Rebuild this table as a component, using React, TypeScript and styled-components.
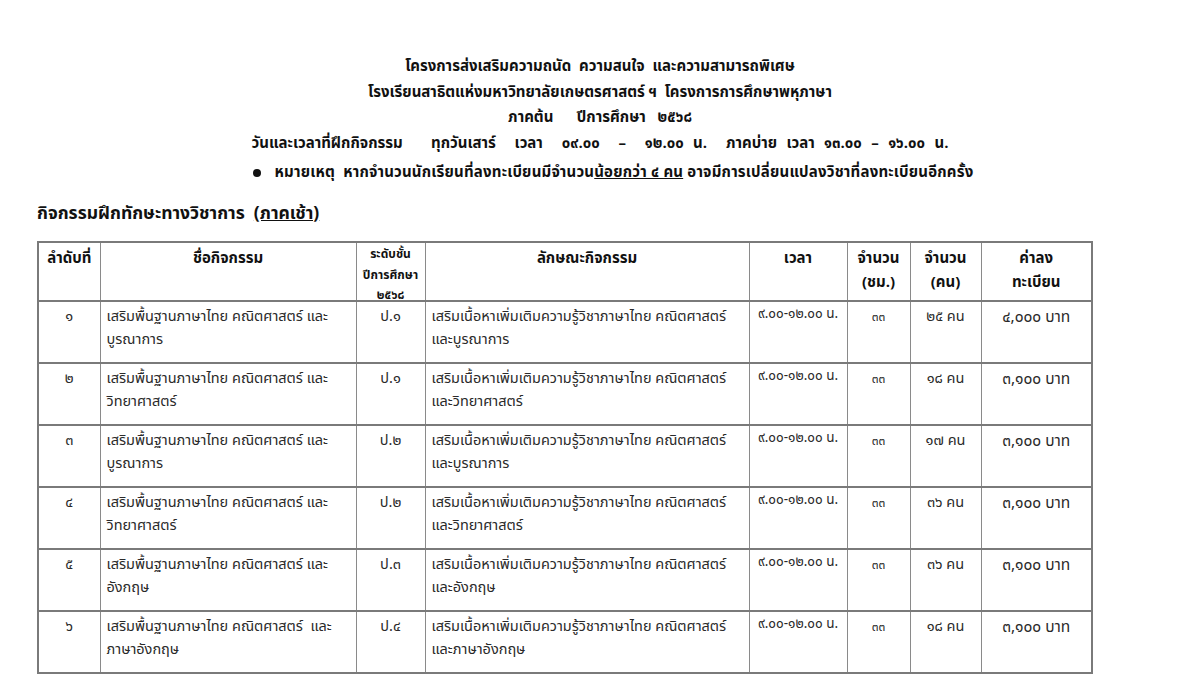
import React from "react";
import styled, { createGlobalStyle } from "styled-components";

const Global = createGlobalStyle`
  html, body { margin: 0; padding: 0; background: #ffffff; }
  body { font-family: "Noto Sans Thai", "Noto Sans", "DejaVu Sans", sans-serif; color: #1a1a1a; }
`;

const Page = styled.div`
  width: 1200px;
  height: 699px;
  overflow: hidden;
  box-sizing: border-box;
  padding: 54px 0 0 37px;
`;

const TitleBlock = styled.div`
  width: 1126px;
  display: flex;
  flex-direction: column;
  align-items: center;
`;

const TitleLine = styled.div<{ $ws?: number }>`
  font-size: 15px;
  font-weight: 700;
  line-height: 25.5px;
  white-space: pre;
  word-spacing: ${(p) => p.$ws ?? 0}px;
  color: #111;
`;

const NoteLine = styled(TitleLine)`
  display: flex;
  align-items: center;
  gap: 14px;
  margin-left: 26px;
  margin-top: 2px;
  line-height: 30px;
  letter-spacing: 0.2px;
`;

const Bullet = styled.span`
  width: 8px;
  height: 8px;
  border-radius: 50%;
  background: #111;
`;

const U = styled.span`
  text-decoration: underline;
`;

const SectionTitle = styled.div`
  font-size: 17.5px;
  font-weight: 700;
  margin-top: 13px;
  line-height: 26px;
  color: #111;
  white-space: pre;
`;

const Table = styled.table`
  margin-top: 14px;
  border-collapse: collapse;
  table-layout: fixed;
  width: 1054px;
  border: 2px solid #7a7a7a;
`;

const Th = styled.th`
  border: 1px solid #8a8a8a;
  font-size: 15px;
  line-height: 24px;
  font-weight: 700;
  text-align: center;
  vertical-align: top;
  padding: 4px 2px 0;
  height: 59px;
  box-sizing: border-box;
  color: #111;
`;

const SmallHead = styled.div`
  font-size: 12px;
  line-height: 20.5px;
  height: 52px;
  margin-top: -3px;
  overflow: visible;
`;

const Td = styled.td<{ $align?: string; $size?: number; $pt?: number }>`
  border: 1px solid #8a8a8a;
  border-top: 2px solid #7a7a7a;
  font-size: ${(p) => p.$size ?? 14.5}px;
  line-height: 23px;
  text-align: ${(p) => p.$align ?? "center"};
  vertical-align: top;
  padding: ${(p) => p.$pt ?? 4}px 6px 0;
  height: 62px;
  box-sizing: border-box;
  color: #2a2a2a;
`;

const cols = [62, 256, 69, 324, 98, 63, 71, 111];

const rows = [
  { n: "๑", name: "เสริมพื้นฐานภาษาไทย คณิตศาสตร์ และ\nบูรณาการ", lv: "ป.๑", desc: "เสริมเนื้อหาเพิ่มเติมความรู้วิชาภาษาไทย คณิตศาสตร์\nและบูรณาการ", ppl: "๒๕ คน", fee: "๔,๐๐๐ บาท" },
  { n: "๒", name: "เสริมพื้นฐานภาษาไทย คณิตศาสตร์ และ\nวิทยาศาสตร์", lv: "ป.๑", desc: "เสริมเนื้อหาเพิ่มเติมความรู้วิชาภาษาไทย คณิตศาสตร์\nและวิทยาศาสตร์", ppl: "๑๘ คน", fee: "๓,๑๐๐ บาท" },
  { n: "๓", name: "เสริมพื้นฐานภาษาไทย คณิตศาสตร์ และ\nบูรณาการ", lv: "ป.๒", desc: "เสริมเนื้อหาเพิ่มเติมความรู้วิชาภาษาไทย คณิตศาสตร์\nและบูรณาการ", ppl: "๑๗ คน", fee: "๓,๑๐๐ บาท" },
  { n: "๔", name: "เสริมพื้นฐานภาษาไทย คณิตศาสตร์ และ\nวิทยาศาสตร์", lv: "ป.๒", desc: "เสริมเนื้อหาเพิ่มเติมความรู้วิชาภาษาไทย คณิตศาสตร์\nและวิทยาศาสตร์", ppl: "๓๖ คน", fee: "๓,๑๐๐ บาท" },
  { n: "๕", name: "เสริมพื้นฐานภาษาไทย คณิตศาสตร์ และ\nอังกฤษ", lv: "ป.๓", desc: "เสริมเนื้อหาเพิ่มเติมความรู้วิชาภาษาไทย คณิตศาสตร์\nและอังกฤษ", ppl: "๓๖ คน", fee: "๓,๑๐๐ บาท" },
  { n: "๖", name: "เสริมพื้นฐานภาษาไทย คณิตศาสตร์  และ\nภาษาอังกฤษ", lv: "ป.๔", desc: "เสริมเนื้อหาเพิ่มเติมความรู้วิชาภาษาไทย คณิตศาสตร์\nและภาษาอังกฤษ", ppl: "๑๘ คน", fee: "๓,๑๐๐ บาท" },
];

const Pre = styled.span`
  white-space: pre;
`;

export default function App() {
  return (
    <>
      <Global />
      <Page>
        <TitleBlock>
          <TitleLine>โครงการส่งเสริมความถนัด  ความสนใจ  และความสามารถพิเศษ</TitleLine>
          <TitleLine>โรงเรียนสาธิตแห่งมหาวิทยาลัยเกษตรศาสตร์ ฯ  โครงการการศึกษาพหุภาษา</TitleLine>
          <TitleLine>ภาคต้น      ปีการศึกษา   ๒๕๖๘</TitleLine>
          <TitleLine $ws={5.5}>วันและเวลาที่ฝึกกิจกรรม   ทุกวันเสาร์  เวลา  ๐๙.๐๐  –  ๑๒.๐๐ น.  ภาคบ่าย เวลา ๑๓.๐๐ – ๑๖.๐๐ น.</TitleLine>
          <NoteLine>
            <Bullet />
            <span>
              หมายเหตุ  หากจำนวนนักเรียนที่ลงทะเบียนมีจำนวน<U>น้อยกว่า ๔ คน</U> อาจมีการเปลี่ยนแปลงวิชาที่ลงทะเบียนอีกครั้ง
            </span>
          </NoteLine>
        </TitleBlock>
        <SectionTitle>
          กิจกรรมฝึกทักษะทางวิชาการ  <U>(ภาคเช้า)</U>
        </SectionTitle>
        <Table>
          <colgroup>
            {cols.map((w, i) => (
              <col key={i} style={{ width: w }} />
            ))}
          </colgroup>
          <thead>
            <tr>
              <Th>ลำดับที่</Th>
              <Th>ชื่อกิจกรรม</Th>
              <Th>
                <SmallHead>
                  ระดับชั้น
                  <br />
                  ปีการศึกษา
                  <br />
                  ๒๕๖๘
                </SmallHead>
              </Th>
              <Th>ลักษณะกิจกรรม</Th>
              <Th>เวลา</Th>
              <Th>
                จำนวน
                <br />
                (ชม.)
              </Th>
              <Th>
                จำนวน
                <br />
                (คน)
              </Th>
              <Th>
                ค่าลง
                <br />
                ทะเบียน
              </Th>
            </tr>
          </thead>
          <tbody>
            {rows.map((r) => (
              <tr key={r.n}>
                <Td>{r.n}</Td>
                <Td $align="left">
                  <Pre>{r.name}</Pre>
                </Td>
                <Td>{r.lv}</Td>
                <Td $align="left">
                  <Pre>{r.desc}</Pre>
                </Td>
                <Td $size={13.5} $pt={1}>๙.๐๐-๑๒.๐๐ น.</Td>
                <Td $size={12}>๓๓</Td>
                <Td $size={14.5}>{r.ppl}</Td>
                <Td $size={15.5}>{r.fee}</Td>
              </tr>
            ))}
          </tbody>
        </Table>
      </Page>
    </>
  );
}
